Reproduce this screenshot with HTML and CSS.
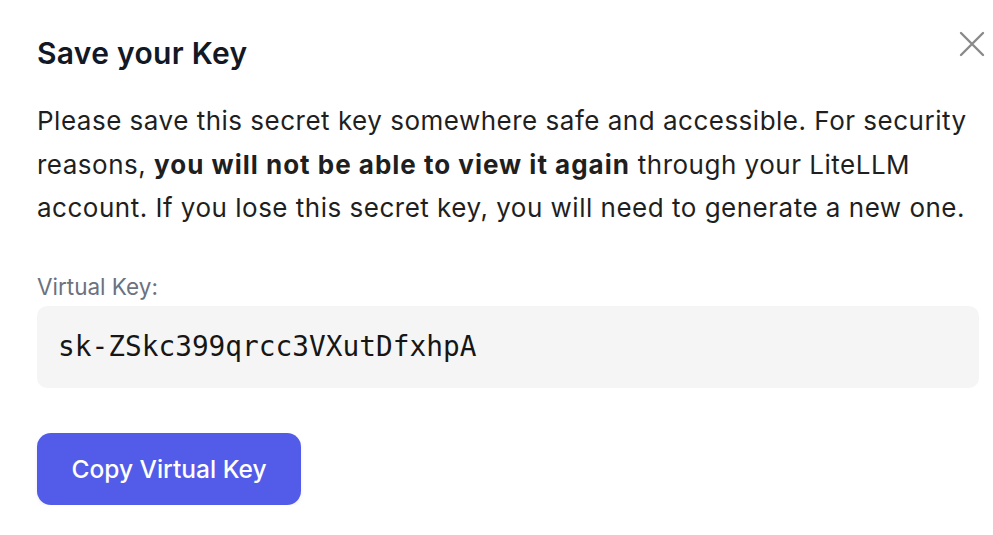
FILE: index.html
```html
<!DOCTYPE html>
<html>
<head>
<meta charset="utf-8">
<link rel="stylesheet" href="styles.css">
</head>
<body>
<div class="modal">
  <button class="close" aria-label="Close">
    <svg width="26" height="26" viewBox="0 0 26 26"><path d="M2 2L24 24M24 2L2 24" stroke="#8a8a8a" stroke-width="2.4" stroke-linecap="round" fill="none"/></svg>
  </button>
  <h2 class="title">Save your Key</h2>
  <p class="desc">Please save this secret key somewhere safe and accessible. For security reasons, <strong>you will not be able to view it again</strong> through your LiteLLM account. If you lose this secret key, you will need to generate a new one.</p>
  <div class="label">Virtual Key:</div>
  <div class="keybox">sk-ZSkc399qrcc3VXutDfxhpA</div>
  <button class="copy">Copy Virtual Key</button>
</div>
</body>
</html>
```
FILE: styles.css
```css
html, body {
  margin: 0;
  padding: 0;
  background: #ffffff;
}
body {
  font-family: Inter, "Noto Sans", sans-serif;
  color: #1f1f1f;
}
.modal {
  position: relative;
  padding: 30px 14px 0 37px;
}
.close {
  position: absolute;
  top: 31px;
  right: 8px;
  background: none;
  border: none;
  padding: 0;
  cursor: pointer;
}
.close svg { display: block; }
.title {
  margin: 0;
  font-size: 30px;
  font-weight: 600;
  letter-spacing: 0.3px;
  color: #131826;
  line-height: 46px;
}
.desc {
  margin: 23px 0 0;
  font-size: 26px;
  line-height: 43.5px;
  color: #1f1f1f;
  letter-spacing: 0.5px;
}
.desc strong {
  font-weight: 700;
  letter-spacing: 1px;
}
.label {
  margin-top: 40px;
  font-size: 22.5px;
  line-height: 34px;
  color: #6b7280;
}
.keybox {
  margin-top: 2px;
  background: #f5f5f5;
  border-radius: 10px;
  height: 82px;
  display: flex;
  align-items: center;
  padding-left: 21px;
  font-family: "DejaVu Sans Mono", monospace;
  font-size: 27.8px;
  color: #161616;
}
.copy {
  margin-top: 45px;
  width: 264px;
  height: 72px;
  border: none;
  border-radius: 14px;
  background: #525ce8;
  color: #ffffff;
  font-family: Inter, "Noto Sans", sans-serif;
  font-size: 24.5px;
  font-weight: 500;
  box-shadow: 0 2px 4px rgba(0,0,0,0.06);
}
```
